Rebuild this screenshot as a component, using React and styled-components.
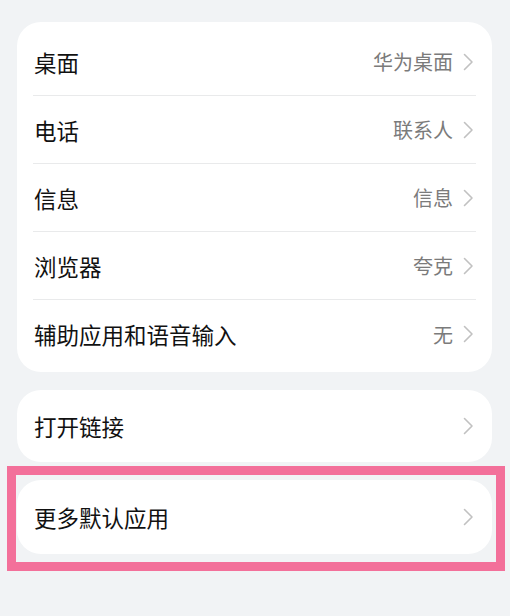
import React from "react";
import styled, { createGlobalStyle } from "styled-components";

const Global = createGlobalStyle`
  html, body {
    margin: 0;
    padding: 0;
    background: #f1f3f5;
  }
  body {
    font-family: "Noto Sans CJK SC", "Noto Sans", sans-serif;
  }
`;

const Page = styled.div`
  display: flex;
  flex-direction: column;
  gap: 18px;
  padding: 22px 18px 40px 17px;
  min-height: 616px;
  box-sizing: border-box;
  background: #f1f3f5;
`;

const Card = styled.div`
  background: #ffffff;
  border-radius: 24px;
  padding: ${(p) => (p.$single ? "0" : "6px 0 4px")};
  display: flex;
  flex-direction: column;
`;

const Wrap = styled.div`
  position: relative;
`;

const Highlight = styled.div`
  position: absolute;
  left: -10px;
  right: -13px;
  top: -14px;
  bottom: -17px;
  border: 9px solid #f3709a;
  pointer-events: none;
`;

const Row = styled.div`
  display: flex;
  align-items: center;
  height: ${(p) => p.$h || 68}px;
  margin: 0 16px;
  box-sizing: border-box;
  border-bottom: ${(p) => (p.$last ? "none" : "1px solid #e9eaeb")};
`;

const Label = styled.span`
  flex: 1;
  padding-left: 1px;
  font-size: 22.5px;
  color: #111111;
  font-weight: 400;
`;

const Value = styled.span`
  font-size: 20px;
  color: #7b7b7b;
  margin-right: 10px;
`;

const Chevron = () => (
  <svg width="11" height="18" viewBox="0 0 11 18" style={{ marginRight: 2 }}>
    <path
      d="M1.5 1.5 L9 9 L1.5 16.5"
      fill="none"
      stroke="#c1c1c1"
      strokeWidth="1.6"
      strokeLinecap="round"
      strokeLinejoin="round"
    />
  </svg>
);

const items = [
  { label: "桌面", value: "华为桌面" },
  { label: "电话", value: "联系人" },
  { label: "信息", value: "信息" },
  { label: "浏览器", value: "夸克" },
  { label: "辅助应用和语音输入", value: "无" },
];

export default function App() {
  return (
    <>
      <Global />
      <Page>
        <Card>
          {items.map((it, i) => (
            <Row key={it.label} $last={i === items.length - 1}>
              <Label>{it.label}</Label>
              <Value>{it.value}</Value>
              <Chevron />
            </Row>
          ))}
        </Card>
        <Card $single>
          <Row $last $h={72}>
            <Label>打开链接</Label>
            <Chevron />
          </Row>
        </Card>
        <Wrap>
          <Card $single>
            <Row $last $h={74}>
              <Label>更多默认应用</Label>
              <Chevron />
            </Row>
          </Card>
          <Highlight />
        </Wrap>
      </Page>
    </>
  );
}
